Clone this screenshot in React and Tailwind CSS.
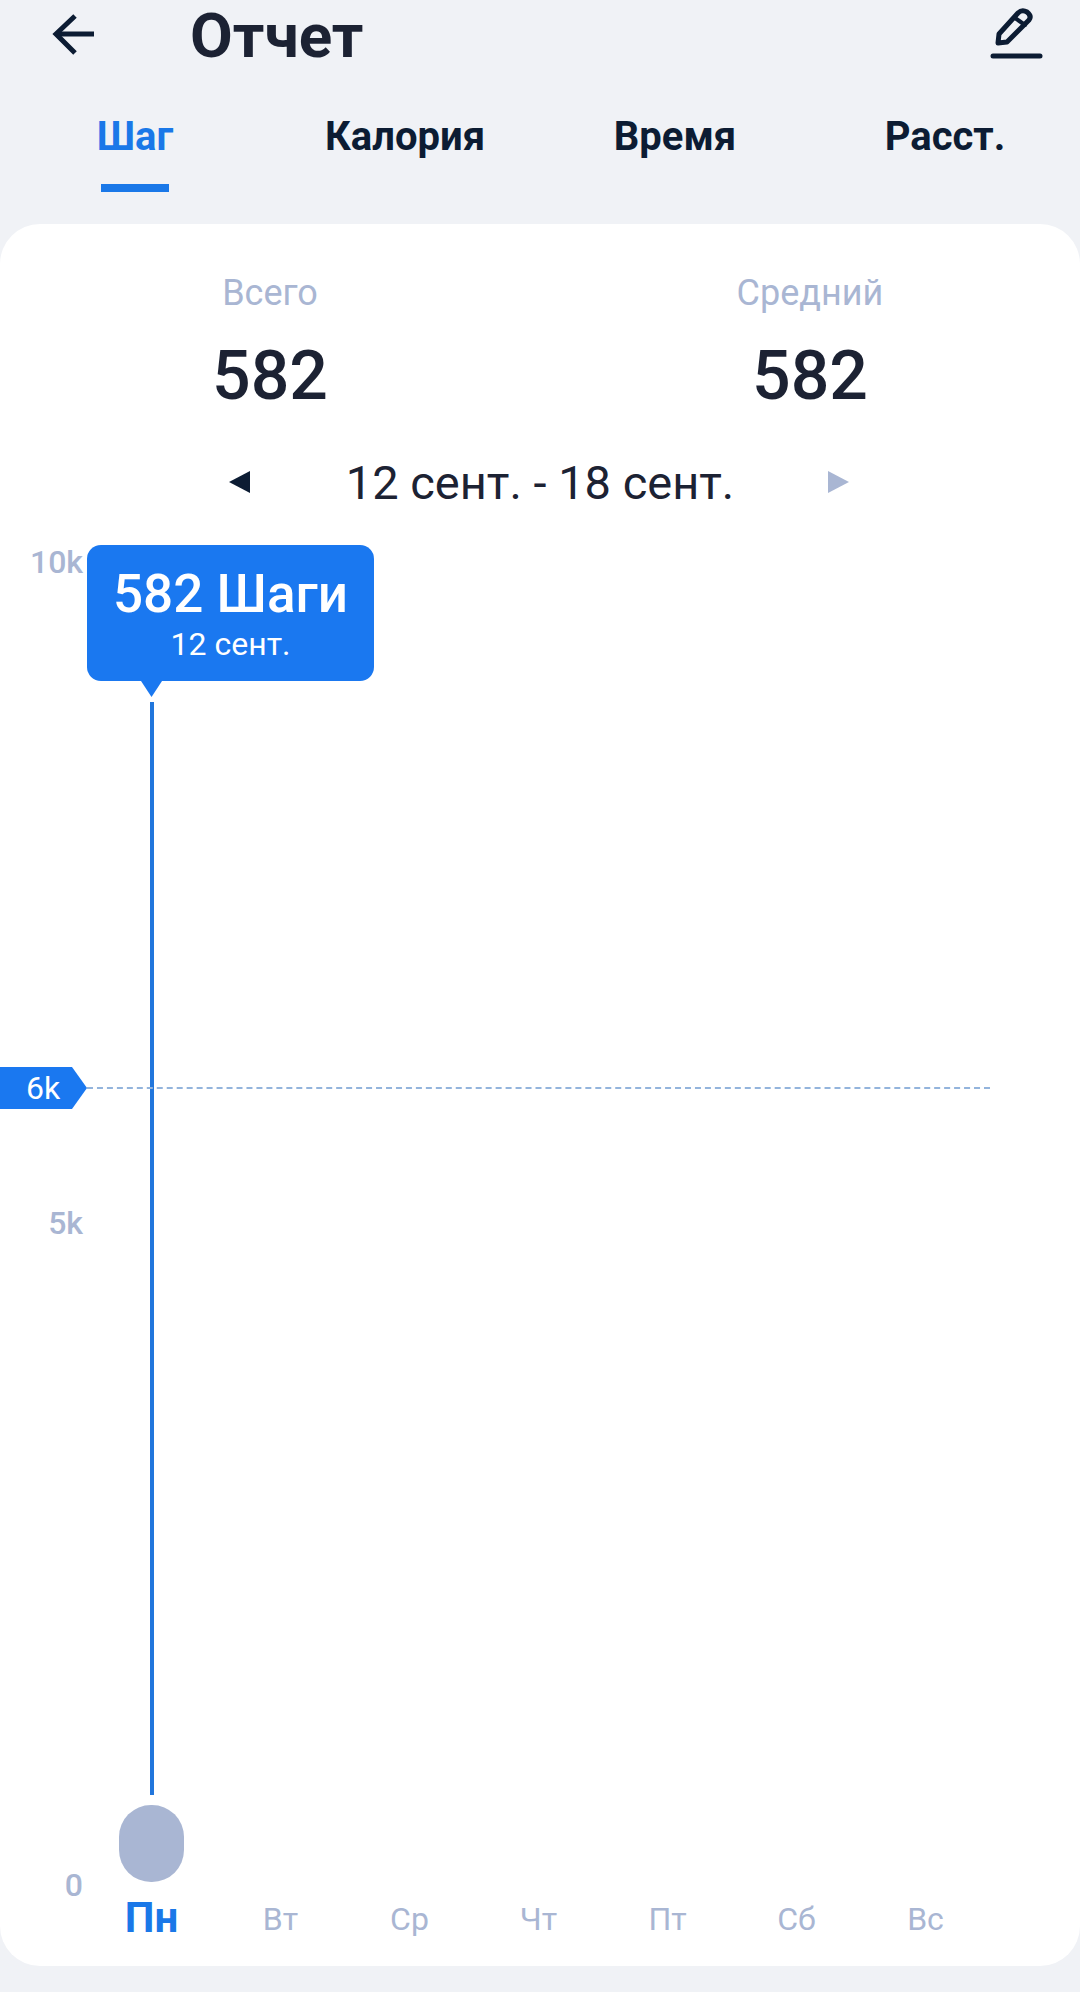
export default function App() {
  const days = ["Вт", "Ср", "Чт", "Пт", "Сб", "Вс"];
  return (
    <div className="w-[1080px] h-[1992px] bg-[#f0f2f6] font-['Roboto',sans-serif] overflow-hidden">
      <header className="h-[72px] flex items-center pl-[52px] pr-[36px]">
        <svg className="w-[44px] h-[44px] shrink-0" viewBox="0 0 44 44" fill="none" stroke="#0c1c33" strokeWidth="5" strokeLinejoin="miter">
          <path d="M42 20H4" />
          <path d="M23 2L4 20l19 19" />
        </svg>
        <h1 className="ml-[94px] text-[62px] leading-none font-bold text-[#1c2233]">Отчет</h1>
        <svg className="ml-auto w-[54px] h-[60px]" viewBox="0 0 54 60" fill="none" stroke="#0c1c33" strokeWidth="5" strokeLinecap="round" strokeLinejoin="round">
          <path d="M8 37l1-9L28 7q4-4 9-1 5 4 2 8L17 36z" />
          <path d="M25 12l10 7" strokeWidth="4" />
          <path d="M3 50h47" />
        </svg>
      </header>
      <nav className="grid grid-cols-4 mt-[40px] h-[112px]">
        <div className="flex flex-col items-center">
          <span className="text-[40px] leading-[50px] font-bold text-[#1a78e8]">Шаг</span>
          <span className="mt-[22px] w-[68px] h-[8px] bg-[#1a78e8]" />
        </div>
        <span className="text-center text-[40px] leading-[50px] font-bold text-[#0c1c33]">Калория</span>
        <span className="text-center text-[40px] leading-[50px] font-bold text-[#0c1c33]">Время</span>
        <span className="text-center text-[40px] leading-[50px] font-bold text-[#0c1c33]">Расст.</span>
      </nav>
      <main className="h-[1742px] bg-white rounded-[40px] flex flex-col">
        <div className="grid grid-cols-2 pt-[45px]">
          <div className="flex flex-col items-center">
            <span className="text-[36px] leading-[48px] text-[#a9b6d3]">Всего</span>
            <span className="mt-[14px] text-[68px] leading-[90px] font-medium text-[#1c2233]">582</span>
          </div>
          <div className="flex flex-col items-center">
            <span className="text-[36px] leading-[48px] text-[#a9b6d3]">Средний</span>
            <span className="mt-[14px] text-[68px] leading-[90px] font-medium text-[#1c2233]">582</span>
          </div>
        </div>
        <div className="relative mt-[29px] mb-[37px] h-[66px] flex items-center justify-center text-[47px] text-[#1c2233]">
          <svg className="absolute left-[229px] top-[21px] w-[21px] h-[22px]" viewBox="0 0 21 22"><path d="M21 0v22L0 11z" fill="#0c1c33" /></svg>
          12 сент. - 18 сент.
          <svg className="absolute left-[828px] top-[21px] w-[21px] h-[22px]" viewBox="0 0 21 22"><path d="M0 0v22l21-11z" fill="#a9b6d3" /></svg>
        </div>
        <div className="relative flex-1">
          <span className="absolute right-[997px] top-[-10px] text-[32px] leading-[38px] font-medium text-[#a9b6d3]">10k</span>
          <div className="absolute left-[87px] top-[-8px] w-[287px] h-[136px] rounded-[14px] bg-[#1a78f0] text-white flex flex-col items-center pt-[18px]">
            <span className="text-[53px] leading-[62px] font-medium">582 Шаги</span>
            <span className="text-[32px] leading-[38px]">12 сент.</span>
          </div>
          <svg className="absolute left-[141px] top-[128px] w-[21px] h-[16px]" viewBox="0 0 21 16"><path d="M0 0h21L10.500 16z" fill="#1a78f0" /></svg>
          <div className="absolute left-[150px] top-[149px] w-[4px] h-[1093px] bg-[#2176dc]" />
          <div className="absolute left-0 top-[514px] w-[990px] h-[42px] flex items-center">
            <div className="relative w-[87px] h-[42px] bg-[#1a78f0] text-white text-[32px] leading-[42px] [clip-path:polygon(0_0,72px_0,87px_50%,72px_100%,0_100%)]">
              <span className="absolute left-[26px] top-0">6k</span>
            </div>
            <div className="flex-1 border-t-2 border-dashed border-[#93b4dc]" />
          </div>
          <span className="absolute right-[997px] top-[651px] text-[32px] leading-[38px] font-medium text-[#a9b6d3]">5k</span>
          <span className="absolute right-[997px] top-[1313px] text-[32px] leading-[38px] font-medium text-[#a9b6d3]">0</span>
          <div className="absolute left-[119px] top-[1252px] w-[65px] h-[77px] rounded-[32px] bg-[#a9b6d3]" />
          <div className="absolute left-[87px] top-[1342px] w-[903px] grid grid-cols-7 items-center text-center text-[32px] leading-[44px] text-[#a9b6d3]">
            <span className="text-[42px] font-bold text-[#1a78e8]">Пн</span>
            {days.map((d) => (
              <span key={d} className="pt-[2px]">{d}</span>
            ))}
          </div>
        </div>
      </main>
    </div>
  );
}
